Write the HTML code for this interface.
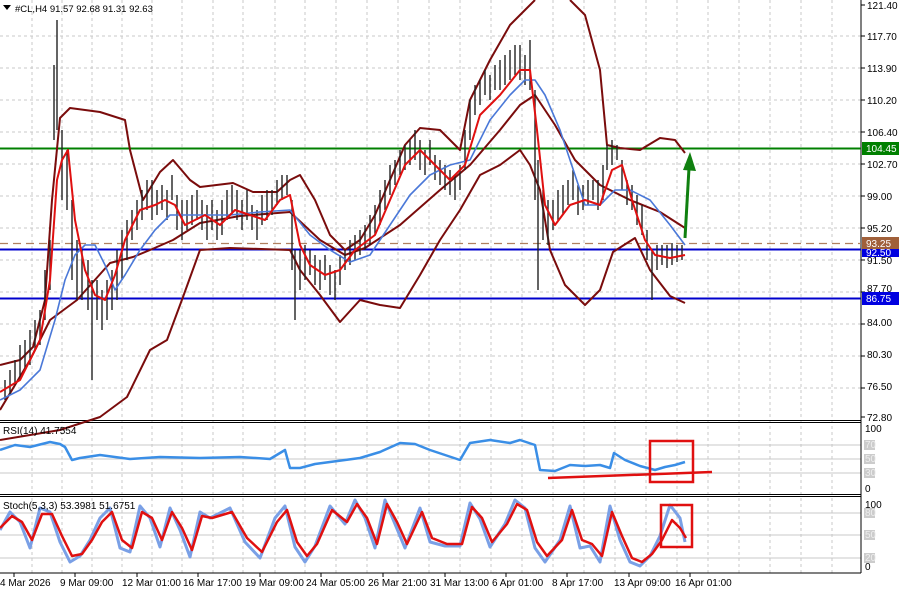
<!DOCTYPE html><html><head><meta charset="utf-8"><style>
body{margin:0;background:#fff;width:900px;height:592px;overflow:hidden;font-family:"Liberation Sans",sans-serif}
svg text{font-family:"Liberation Sans",sans-serif;font-size:10px;fill:#000}
</style></head><body>
<svg width="900" height="592" viewBox="0 0 900 592" xmlns="http://www.w3.org/2000/svg">
<rect width="900" height="592" fill="#fff"/>
<g stroke="#c8c8c8" stroke-dasharray="3,3" stroke-width="1">
<path d="M32 0V573M62 0V573M92 0V573M122 0V573M152 0V573M182 0V573M213 0V573M243 0V573M275 0V573M305 0V573M336 0V573M367 0V573M398 0V573M429 0V573M460 0V573M491 0V573M522 0V573M553 0V573M584 0V573M615 0V573M646 0V573M677 0V573M708 0V573M739 0V573M770 0V573M801 0V573M832 0V573"/>
<path d="M0 36H861M0 68H861M0 100H861M0 132H861M0 164H861M0 196H861M0 228H861M0 260H861M0 292H861M0 324H861M0 356H861M0 388H861"/>
</g>
<g stroke="#c8c8c8" stroke-width="1"><path d="M0 445H861M0 459H861M0 473H861M0 513H861M0 535H861M0 558H861"/></g>
<g stroke="#000" fill="none" stroke-width="1">
<path d="M861 0V573M0 420.5H861M0 422.5H861M0 494.5H861M0 496.5H861M0 573H861"/>
</g>
<path d="M0 148.5H861" stroke="#008000" stroke-width="2"/>
<path d="M0 243.5H861" stroke="#b08060" stroke-dasharray="8,5" stroke-width="1.2"/>
<path d="M0 249.5H861" stroke="#0000cc" stroke-width="2"/>
<path d="M0 298.5H861" stroke="#0000cc" stroke-width="2"/>
<g fill="none" stroke="#7a0c0c" stroke-width="2" stroke-linejoin="round">
<path d="M0 365L20 360L33 347L45 300L52 200L60 118L70 108L100 112L125 120L130 150L143 200L160 172L173 160L190 180L200 187L233 183L253 192L277 192L290 180L300 175L315 200L330 235L345 250L360 240L375 215L390 180L405 145L420 128L440 130L460 150L470 100L490 60L510 25L525 10L535 0M570 0L585 15L600 70L607 145L620 148L640 150L660 138L675 140L685 153"/>
<path d="M0 410L30 360L50 320L77 300L110 263L133 257L150 250L173 240L200 223L240 216L290 212L320 240L345 255L365 248L400 225L440 190L470 165L500 130L520 105L535 95L555 125L575 160L600 185L630 200L660 212L685 228"/>
<path d="M0 440L60 430L100 417L127 397L150 350L167 340L183 297L200 250L230 248L290 250L300 270L320 295L340 322L360 300L380 305L400 308L420 275L440 240L460 210L480 175L500 165L520 150L530 165L540 190L550 250L565 285L585 305L600 290L613 252L635 238L650 270L670 296L685 303"/>
</g>
<g stroke="#222" stroke-width="1.4" fill="none">
<path d="M5 400V380M10 395V370M15 385V360M20 380V345M25 370V340M30 365V330M35 350V320M40 345V310M45 320V270M50 290V240M54 140V65M57 130V20M62 200V130M67 210V150M72 280V200M77 300V240M82 300V250M88 310V260M92 380V280M97 320V280M102 330V290M107 320V280M112 310V270M117 300V250M122 280V230M127 260V220M132 240V210M137 230V200M142 220V190M147 210V180M152 220V180M157 215V190M162 210V185M167 220V190M172 200V175M177 230V195M182 240V200M187 230V200M192 225V195M197 220V190M202 230V200M207 240V205M212 230V200M217 240V210M222 235V200M227 220V190M232 215V185M237 220V190M242 230V200M247 220V190M252 230V205M257 240V210M262 225V195M267 220V190M272 215V190M277 205V180M282 200V175M287 195V175M292 270V200M295 320V250M300 290V250M305 280V245M310 275V250M315 285V255M320 290V260M325 280V255M330 295V265M335 300V270M340 285V255M345 270V250M350 265V240M355 260V235M360 255V230M365 250V225M370 245V215M375 235V205M380 225V190M385 210V180M390 195V165M395 185V160M400 175V150M405 170V145M410 165V140M415 160V130M420 170V140M425 175V150M430 165V140M435 180V155M440 185V160M445 190V165M450 195V170M455 200V175M460 190V165M465 170V130M470 140V100M475 115V85M480 105V80M485 95V70M490 100V75M495 90V65M500 90V60M505 85V55M510 80V50M515 75V45M520 80V45M525 85V55M530 90V40M535 200V90M538 290V160M543 240V190M548 245V200M553 230V200M558 220V190M563 215V185M568 205V180M573 200V170M578 215V185M583 210V185M588 205V180M593 200V180M598 210V180M603 200V165M607 170V145M612 165V140M617 160V145M622 190V160M627 205V180M632 210V185M637 225V195M642 235V205M647 260V230M652 300V250M657 270V245M662 265V245M667 268V245M672 265V243M677 262V245M682 260V245"/>
</g>
<path fill="none" stroke="#4a78d8" stroke-width="1.6" stroke-linejoin="round" d="M0 400L20 390L40 370L55 320L65 280L75 255L85 245L95 245L105 265L115 290L125 275L140 250L155 230L170 215L185 215L200 215L230 215L260 212L290 210L310 235L330 250L350 262L370 255L390 225L410 195L430 175L450 165L470 160L490 120L510 95L525 80L535 80L545 95L560 130L575 175L585 205L600 205L615 190L630 190L650 200L670 225L685 245"/>
<path fill="none" stroke="#e01010" stroke-width="2" stroke-linejoin="round" d="M0 392L20 380L40 340L50 280L57 180L62 160L68 150L75 220L85 270L95 295L105 300L115 275L125 240L140 210L155 205L165 200L175 205L185 225L195 220L205 215L220 225L235 210L250 215L265 220L280 200L290 195L300 245L310 265L325 275L340 270L355 250L375 235L390 200L405 165L420 150L435 165L450 180L465 165L480 115L500 95L520 70L530 70L537 130L545 205L555 225L570 205L585 200L600 205L612 170L622 165L632 200L645 240L655 255L670 258L685 255"/>
<path d="M685 238L689 168" stroke="#108010" stroke-width="3" fill="none"/>
<path d="M683 170L690 152L696 171Z" fill="#108010"/>
<path fill="none" stroke="#3a8ee6" stroke-width="2.5" stroke-linejoin="round" d="M0 450L15 445L30 447L50 442L60 444L65 447L72 460L80 458L100 455L130 459L160 457L200 458L240 457L270 459L285 450L290 468L300 468L315 464L330 462L360 458L380 452L400 443L415 444L430 450L445 455L460 460L470 443L490 440L510 443L520 440L535 445L540 470L555 471L570 465L585 466L600 465L610 468L614 453L625 460L640 466L655 470L665 467L675 465L685 462"/>
<path d="M548 478L712 472" stroke="#e01010" stroke-width="2.5"/>
<rect x="650" y="441" width="43" height="41" fill="none" stroke="#e01010" stroke-width="2.5"/>
<path fill="none" stroke="#7aa0e6" stroke-width="3" stroke-linejoin="round" d="M0 530L10 512L20 522L30 548L40 508L50 512L60 542L70 562L80 556L90 540L100 518L110 508L120 548L130 552L140 506L150 518L160 547L170 508L180 530L190 557L200 512L210 518L230 508L245 542L260 558L275 518L285 506L295 547L305 562L315 546L330 506L345 524L355 500L365 518L375 548L385 500L395 524L405 548L420 508L430 542L445 546L460 546L470 503L480 519L490 547L505 524L515 500L525 508L535 548L545 562L560 540L570 506L580 548L590 546L600 562L610 506L620 540L630 562L640 566L650 556L660 536L670 505L680 518L685 542"/>
<path fill="none" stroke="#e01010" stroke-width="2.5" stroke-linejoin="round" d="M0 528L12 516L22 522L32 540L42 514L52 514L62 536L72 556L82 554L92 540L102 522L112 512L122 540L132 548L142 512L152 518L162 540L172 512L182 528L192 550L202 516L212 518L232 512L247 538L262 552L277 522L287 510L297 542L307 556L317 544L332 510L347 522L357 504L367 518L377 544L387 504L397 522L407 544L422 512L432 538L447 544L462 544L472 507L482 518L492 542L507 524L517 504L527 510L537 542L547 556L562 540L572 510L582 540L592 544L602 556L612 512L622 536L632 558L642 562L652 554L662 540L672 520L680 528L686 538"/>
<rect x="661" y="505" width="31" height="42" fill="none" stroke="#e01010" stroke-width="2.5"/>
<g stroke="#000"><path d="M861 5h4M861 36h4M861 68h4M861 100h4M861 132h4M861 164h4M861 196h4M861 228h4M861 260h4M861 292h4M861 324h4M861 356h4M861 388h4M861 417h4"/></g>
<g>
<text x="867" y="9">121.40</text><text x="867" y="40">117.70</text><text x="867" y="72">113.90</text><text x="867" y="104">110.20</text><text x="867" y="136">106.40</text><text x="867" y="168">102.70</text><text x="867" y="200">99.00</text><text x="867" y="232">95.20</text><text x="867" y="264">91.50</text><text x="867" y="292">87.70</text><text x="867" y="326">84.00</text><text x="867" y="358">80.30</text><text x="867" y="390">76.50</text><text x="867" y="421">72.80</text>
</g>
<rect x="862" y="142" width="37" height="13" fill="#008000"/><text x="866" y="152" style="fill:#fff">104.45</text>
<rect x="862" y="237" width="37" height="12" fill="#a0603a"/><text x="866" y="247" style="fill:#fff">93.25</text>
<rect x="862" y="249" width="37" height="8" fill="#0000e0"/><text x="866" y="256" style="fill:#fff">92.50</text>
<rect x="862" y="292" width="37" height="13" fill="#0000e0"/><text x="866" y="302" style="fill:#fff">86.75</text>
<text x="865" y="432">100</text>
<rect x="864" y="440" width="11" height="10" fill="#ccc"/><text x="865" y="448" style="fill:#eee">70</text>
<rect x="864" y="454" width="11" height="10" fill="#ccc"/><text x="865" y="462" style="fill:#eee">50</text>
<rect x="864" y="468" width="11" height="10" fill="#ccc"/><text x="865" y="476" style="fill:#eee">30</text>
<text x="865" y="492">0</text>
<text x="865" y="508">100</text>
<rect x="864" y="508" width="11" height="10" fill="#ccc"/><text x="865" y="516" style="fill:#eee">80</text>
<rect x="864" y="530" width="11" height="10" fill="#ccc"/><text x="865" y="538" style="fill:#eee">50</text>
<rect x="864" y="553" width="11" height="10" fill="#ccc"/><text x="865" y="561" style="fill:#eee">20</text>
<text x="865" y="570">0</text>
<path d="M3 5L11 5L7 10Z" fill="#000"/>
<text x="15" y="12" style="font-size:9.5px">#CL,H4  91.57 92.68 91.31 92.63</text>
<text x="3" y="434">RSI(14) 41.7554</text>
<text x="3" y="509">Stoch(5,3,3) 53.3981 51.6751</text>
<g stroke="#000"><path d="M14 573v4M75 573v4M137 573v4M198 573v4M260 573v4M321 573v4M383 573v4M445 573v4M506 573v4M567 573v4M629 573v4M690 573v4"/></g>
<text x="0" y="586">4 Mar 2026</text><text x="60" y="586">9 Mar 09:00</text><text x="122" y="586">12 Mar 01:00</text><text x="183" y="586">16 Mar 17:00</text><text x="245" y="586">19 Mar 09:00</text><text x="306" y="586">24 Mar 05:00</text><text x="368" y="586">26 Mar 21:00</text><text x="430" y="586">31 Mar 13:00</text><text x="492" y="586">6 Apr 01:00</text><text x="552" y="586">8 Apr 17:00</text><text x="614" y="586">13 Apr 09:00</text><text x="675" y="586">16 Apr 01:00</text>
</svg>
</body></html>
